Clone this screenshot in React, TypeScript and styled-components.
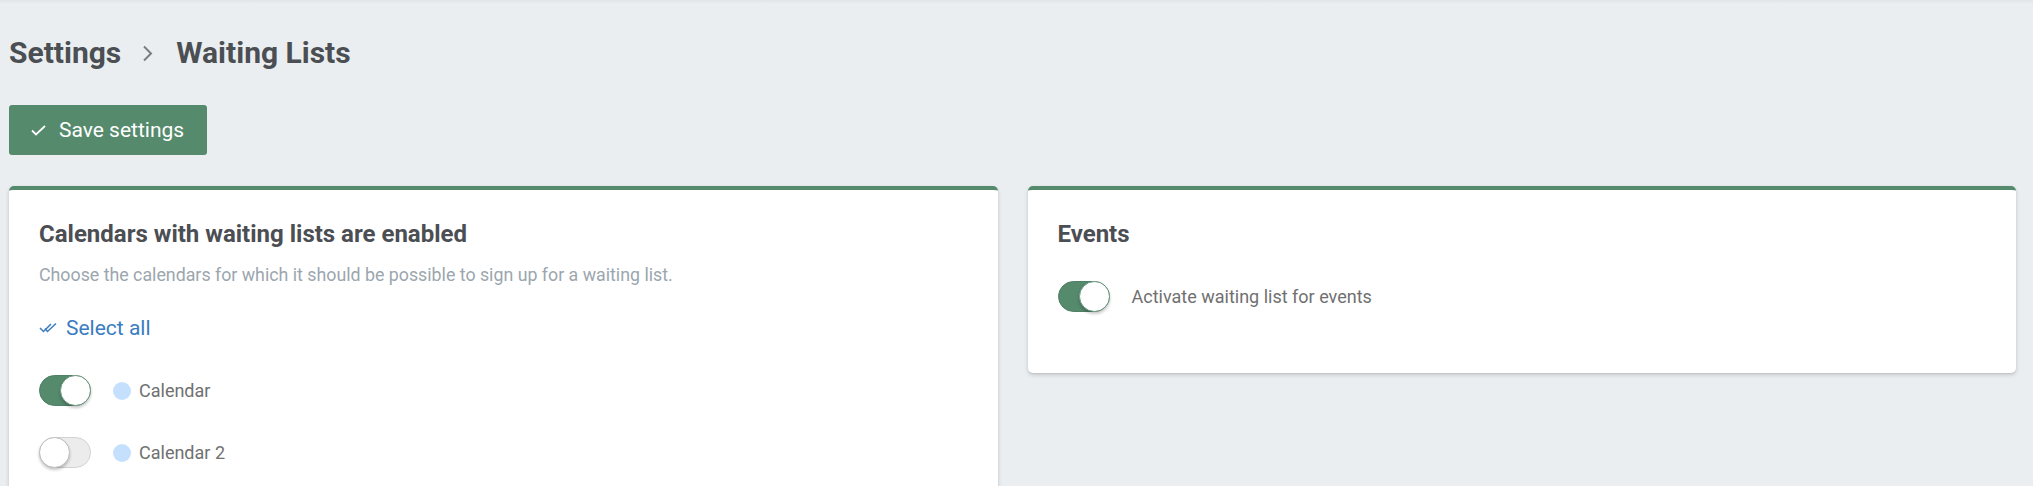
import React from "react";
import styled, { createGlobalStyle } from "styled-components";

const GlobalStyle = createGlobalStyle`
  html, body {
    margin: 0;
    padding: 0;
    background: #eaeef1;
    font-family: Roboto, "Liberation Sans", Arial, sans-serif;
  }
  * { box-sizing: border-box; }
`;

const Page = styled.div`
  min-height: 486px;
  padding: 36px 17px 0 9px;
  background: linear-gradient(#e2e5e8 0, #eaeef1 4px);
`;

const Breadcrumb = styled.h1`
  display: flex;
  align-items: center;
  margin: 0;
  font-size: 30px;
  font-weight: 700;
  color: #4b4e53;
  line-height: 34px;
`;

const Chevron = styled.span`
  display: inline-flex;
  margin: 0 23px 0 21px;
`;

const SaveButton = styled.button`
  display: flex;
  align-items: center;
  gap: 13px;
  margin-top: 35px;
  height: 50px;
  width: 198px;
  padding: 0 0 0 22px;
  border: none;
  border-radius: 3px;
  background: #558a6d;
  color: #fff;
  font-family: Roboto, "Liberation Sans", Arial, sans-serif;
  font-size: 21px;
  font-weight: 400;
  cursor: pointer;
`;

const Cards = styled.div`
  display: grid;
  grid-template-columns: 1fr 1fr;
  gap: 30px;
  align-items: start;
  margin-top: 31px;
`;

const Card = styled.section<{ $minHeight?: number }>`
  background: #fff;
  border-top: 4px solid #558a6d;
  border-radius: 5px;
  box-shadow: 0 2px 4px rgba(0, 0, 0, 0.16), 0 1px 2px rgba(0, 0, 0, 0.06);
  padding: 30px 30px;
  min-height: ${(p) => (p.$minHeight ? `${p.$minHeight}px` : "auto")};
`;

const CardTitle = styled.h2`
  margin: 0;
  font-size: 24px;
  font-weight: 700;
  color: #4b4e53;
  line-height: 28px;
`;

const Subtitle = styled.p`
  margin: 16px 0 0 0;
  font-size: 17.8px;
  color: #9ba6ae;
  line-height: 21px;
`;

const SelectAll = styled.button`
  display: flex;
  align-items: center;
  gap: 8px;
  margin-top: 31px;
  padding: 0;
  border: none;
  background: none;
  color: #3a7dc0;
  font-family: Roboto, "Liberation Sans", Arial, sans-serif;
  font-size: 21px;
  line-height: 24px;
  cursor: pointer;
`;

const ToggleList = styled.div<{ $top: number }>`
  display: flex;
  flex-direction: column;
  gap: 31px;
  margin-top: ${(p) => p.$top}px;
`;

const Row = styled.label`
  display: flex;
  align-items: center;
  height: 31px;
  font-size: 18px;
  color: #707070;
`;

const Track = styled.span<{ $on: boolean }>`
  position: relative;
  flex: none;
  width: 52px;
  height: 31px;
  border-radius: 16px;
  background: ${(p) => (p.$on ? "#558a6d" : "#ececec")};
  border: 1px solid ${(p) => (p.$on ? "#4f7f64" : "#d2d2d2")};
  margin-right: 22px;
`;

const Knob = styled.span<{ $on: boolean }>`
  position: absolute;
  top: -1px;
  left: ${(p) => (p.$on ? "20px" : "-1px")};
  width: 31px;
  height: 31px;
  border-radius: 50%;
  background: #fff;
  border: 1px solid ${(p) => (p.$on ? "#6f9a82" : "#bdbdbd")};
  box-shadow: 0 2px 3px rgba(0, 0, 0, 0.22);
`;

const Dot = styled.span`
  flex: none;
  width: 18px;
  height: 18px;
  border-radius: 50%;
  background: #c5e0fd;
  margin-right: 8px;
`;

const Toggle = ({ on }: { on: boolean }) => (
  <Track $on={on}>
    <Knob $on={on} />
  </Track>
);

const CheckIcon = () => (
  <svg width="15" height="11" viewBox="0 0 15 11" fill="none">
    <path d="M1 5.5 L5 9.5 L14 1" stroke="#fff" strokeWidth="1.8" />
  </svg>
);

const CheckAllIcon = () => (
  <svg width="19" height="12" viewBox="0 0 19 12" fill="none">
    <path d="M1 6 L4.5 9.5 L12 2" stroke="#3a7dc0" strokeWidth="1.5" />
    <path d="M6 6.5 L8.5 9.5 L17 1.5" stroke="#3a7dc0" strokeWidth="1.5" />
  </svg>
);

const ChevronIcon = () => (
  <svg width="11" height="17" viewBox="0 0 11 17" fill="none">
    <path d="M2 1.5 L9 8.5 L2 15.5" stroke="#7a7c80" strokeWidth="2" />
  </svg>
);

export default function App() {
  return (
    <>
      <GlobalStyle />
      <Page>
        <Breadcrumb>
          Settings
          <Chevron>
            <ChevronIcon />
          </Chevron>
          Waiting Lists
        </Breadcrumb>
        <SaveButton>
          <CheckIcon />
          Save settings
        </SaveButton>
        <Cards>
          <Card $minHeight={320}>
            <CardTitle>Calendars with waiting lists are enabled</CardTitle>
            <Subtitle>
              Choose the calendars for which it should be possible to sign up for a waiting list.
            </Subtitle>
            <SelectAll>
              <CheckAllIcon />
              Select all
            </SelectAll>
            <ToggleList $top={35}>
              <Row>
                <Toggle on={true} />
                <Dot />
                Calendar
              </Row>
              <Row>
                <Toggle on={false} />
                <Dot />
                Calendar 2
              </Row>
            </ToggleList>
          </Card>
          <Card $minHeight={187}>
            <CardTitle>Events</CardTitle>
            <ToggleList $top={33}>
              <Row>
                <Toggle on={true} />
                Activate waiting list for events
              </Row>
            </ToggleList>
          </Card>
        </Cards>
      </Page>
    </>
  );
}
